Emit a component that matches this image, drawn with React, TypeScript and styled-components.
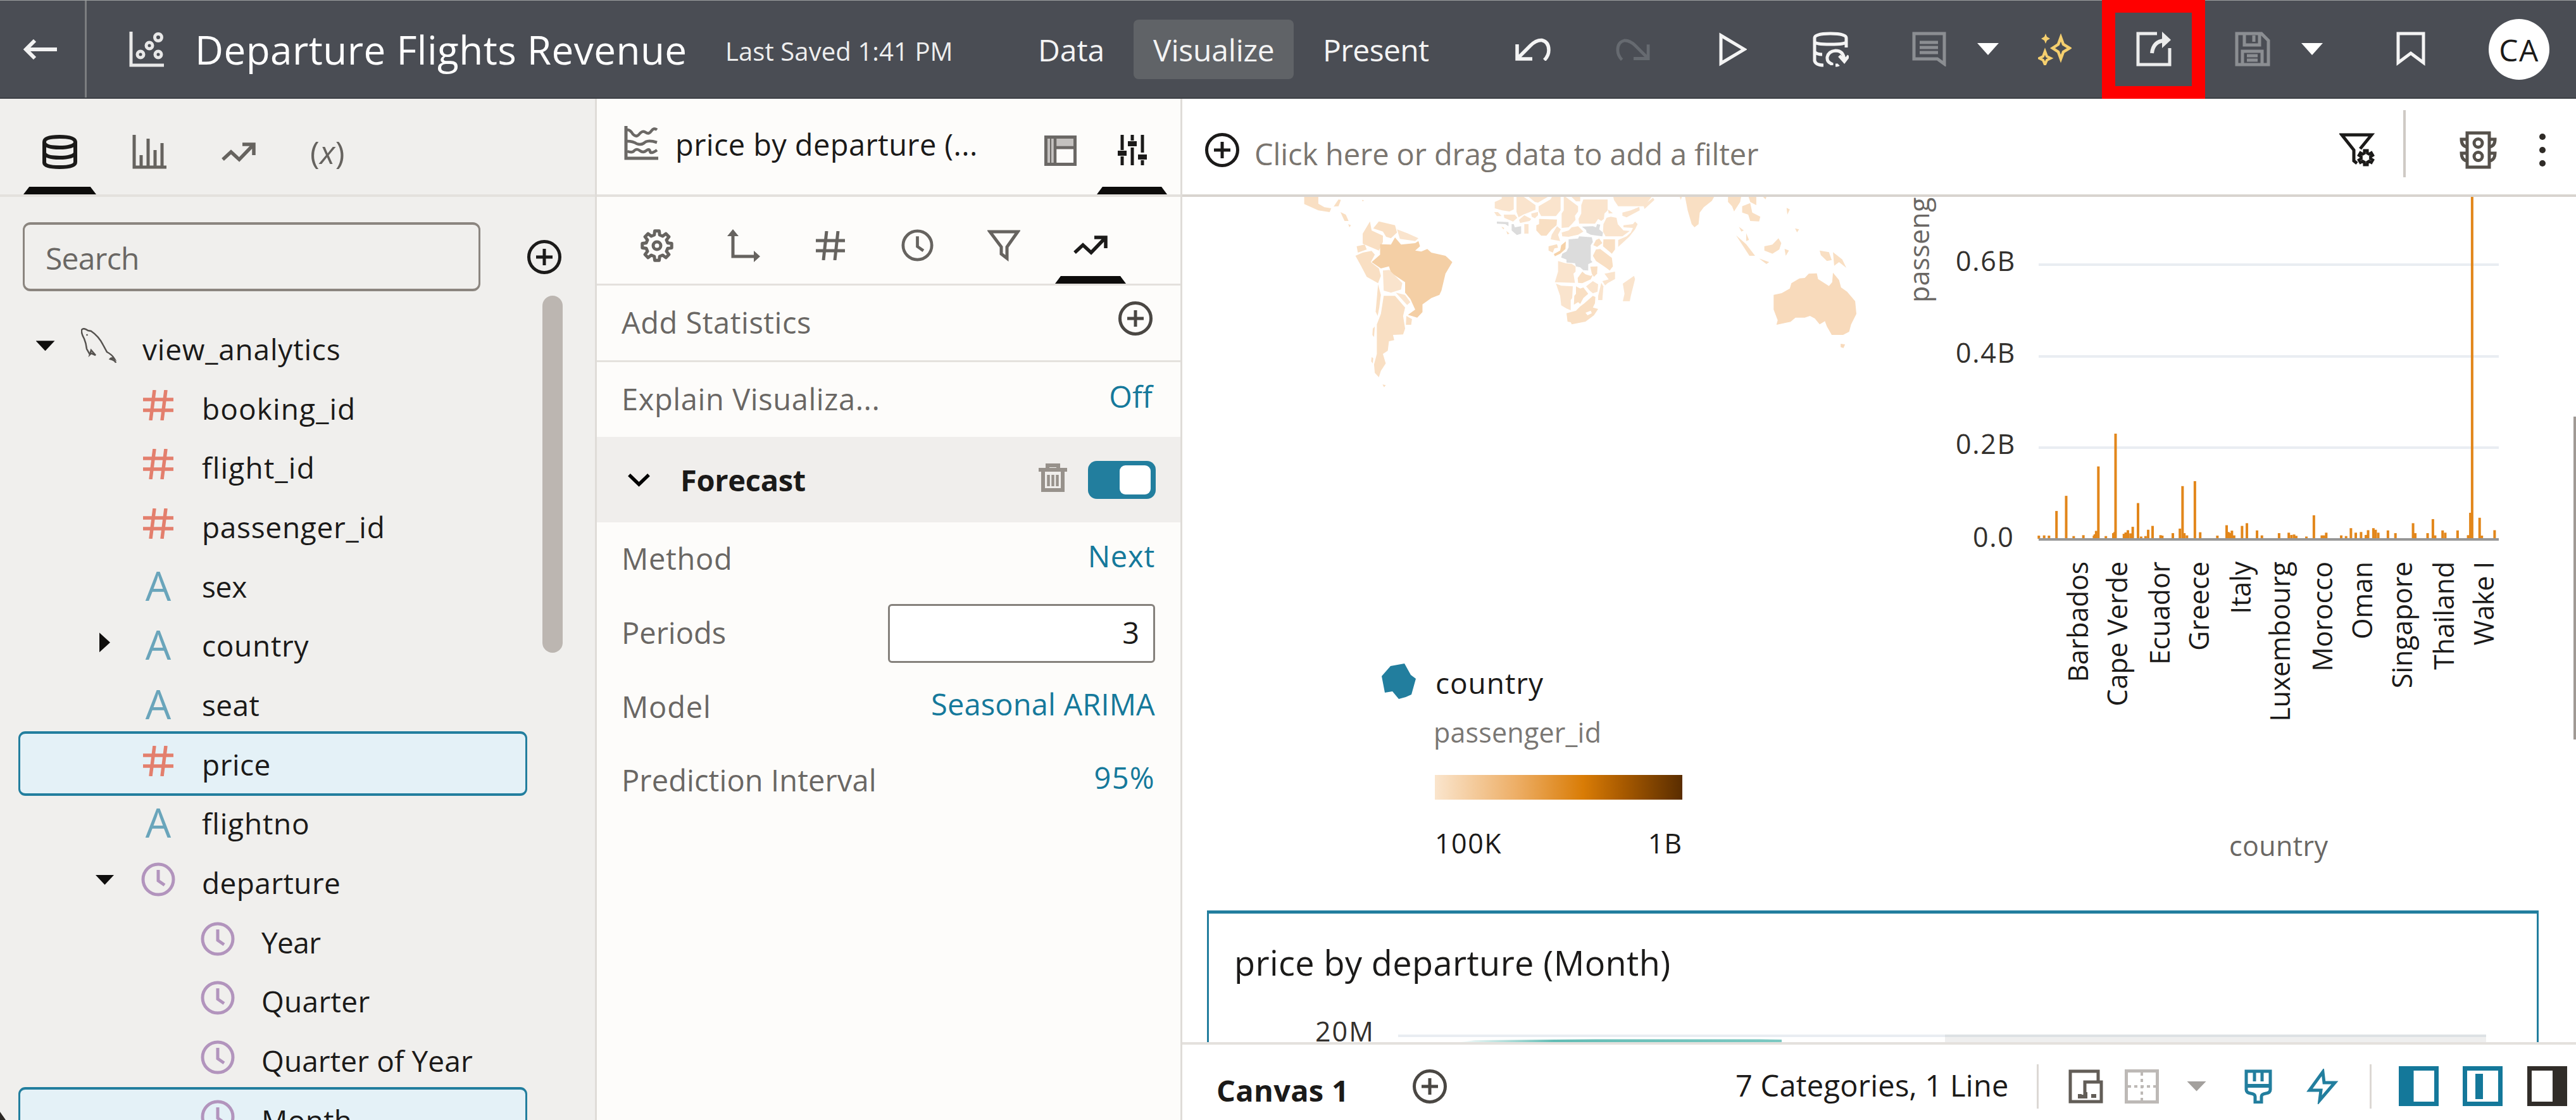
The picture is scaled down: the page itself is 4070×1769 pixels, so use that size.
import React from "react";
import styled, { createGlobalStyle, css } from "styled-components";

const ink = "#1b1a19";
const muted = "#6a6764";
const teal = "#227e9e";
const panelLine = "#e4e1dd";

const GlobalStyle = createGlobalStyle`
  * { box-sizing: border-box; }
  body { margin: 0; background: #fff; overflow: hidden; }
  body, input { font-family: "Open Sans", "Noto Sans", sans-serif; }
`;

/* ---------- shared parts ---------- */

const Icon = styled.svg<{ $w: number; $h: number; $color?: string; $stroke?: number }>`
  display: block;
  flex: none;
  width: ${(p) => p.$w}px;
  height: ${(p) => p.$h}px;
  color: ${(p) => p.$color ?? "inherit"};
  fill: none;
  stroke: currentColor;
  stroke-width: ${(p) => p.$stroke ?? 5};
`;

const Label = styled.span<{ $size?: number; $track?: number; $color?: string; $bold?: boolean }>`
  flex: none;
  white-space: pre;
  font-size: ${(p) => p.$size ?? 47}px;
  letter-spacing: ${(p) => p.$track ?? 0}px;
  color: ${(p) => p.$color ?? ink};
  font-weight: ${(p) => (p.$bold ? 700 : 400)};
  line-height: 64px;
`;

const Triangle = styled.i<{ $dir?: "down" | "right"; $w: number; $h: number; $color?: string }>`
  display: block;
  flex: none;
  width: ${(p) => p.$w}px;
  height: ${(p) => p.$h}px;
  background: ${(p) => p.$color ?? "#0f0e0d"};
  clip-path: ${(p) => (p.$dir === "right" ? "polygon(0 0, 100% 50%, 0 100%)" : "polygon(0 0, 100% 0, 50% 100%)")};
`;

const Grow = styled.div`
  flex: 1;
`;

const PlusCircle = ({ w = 54, h = 54, color = ink }: { w?: number; h?: number; color?: string }) => (
  <Icon $w={w} $h={h} $color={color} viewBox="0 0 54 54">
    <circle cx="27" cy="27" r="24.5" />
    <path d="M27 14v26M14 27h26" />
  </Icon>
);

const gearPoints = (cx: number, cy: number, teeth: number, rOut: number, rIn: number) => {
  const pts: string[] = [];
  const step = (Math.PI * 2) / teeth;
  for (let i = 0; i < teeth; i++) {
    const a = i * step - Math.PI / 2;
    [
      [-0.31, rIn],
      [-0.19, rOut],
      [0.19, rOut],
      [0.31, rIn],
    ].forEach(([o, r]) => pts.push(`${(cx + r * Math.cos(a + o * step)).toFixed(1)},${(cy + r * Math.sin(a + o * step)).toFixed(1)}`));
  }
  return pts.join(" ");
};

const ClockIcon = ({ size, color, stroke = 4.5 }: { size: number; color?: string; stroke?: number }) => (
  <Icon $w={size} $h={size} $color={color} $stroke={stroke} viewBox="0 0 54 54">
    <circle cx="27" cy="27" r="24" />
    <path d="M27 12v17l10 7" />
  </Icon>
);

const TrendIcon = () => (
  <Icon $w={54} $h={31} $stroke={5.5} viewBox="0 0 54 31">
    <path d="M2 27l13-12 13 12L50 4M33 3h18v17" />
  </Icon>
);

/* ---------- header ---------- */

const Header = styled.header`
  display: flex;
  align-items: center;
  height: 156px;
  background: #4a4d54;
  border-top: 1px solid #9da0a0;
  border-bottom: 2px solid #3c3f45;
  color: #fff;
`;

const BackButton = styled.button`
  display: flex;
  align-items: center;
  align-self: stretch;
  width: 137px;
  padding: 0 0 0 37px;
  border: 0;
  border-right: 3px solid #7c7e80;
  background: none;
  color: #f2f2f2;
`;

const WorkbookIcon = styled.div`
  margin: 0 49px 0 67px;
  color: #e8e8e8;
`;

const WorkbookTitle = styled(Label)`
  width: 838px;
`;

const SavedAt = styled(Label)`
  width: 463px;
  padding-top: 7px;
`;

const ModeTabs = styled.nav`
  display: flex;
  gap: 15px;
  height: 94px;
`;

const ModeTab = styled.a<{ $w: number; $active?: boolean }>`
  display: flex;
  align-items: center;
  width: ${(p) => p.$w}px;
  padding: 3px 0 0 31px;
  border-radius: 8px;
  background: ${(p) => (p.$active ? "#606367" : "transparent")};
`;

const Tool = styled.div<{ $gap: number; $dim?: string }>`
  flex: none;
  margin-left: ${(p) => p.$gap}px;
  color: ${(p) => p.$dim ?? "#f4f4f4"};
`;

const Highlight = styled.div`
  display: flex;
  flex: none;
  align-items: center;
  justify-content: center;
  width: 163px;
  height: 158px;
  margin-left: 48px;
  border: 21px solid #f00;
  color: #ececec;
`;

const Avatar = styled.div`
  display: flex;
  flex: none;
  align-items: center;
  justify-content: center;
  width: 96px;
  height: 96px;
  margin-left: 100px;
  padding-top: 3px;
  border-radius: 50%;
  background: #fff;
`;

const TopBar = () => (
  <Header>
    <BackButton aria-label="Back">
      <Icon $w={53} $h={32} $stroke={6} viewBox="0 0 53 32">
        <path d="M53 16H5M18 2L4 16l14 14" />
      </Icon>
    </BackButton>
    <WorkbookIcon>
      <Icon $w={55} $h={56} viewBox="0 0 55 56">
        <path d="M3 0v53h52" />
        <circle cx="18" cy="36" r="5" />
        <circle cx="46" cy="36" r="5" />
        <circle cx="32" cy="22" r="5" />
        <circle cx="46" cy="9" r="5.5" />
      </Icon>
    </WorkbookIcon>
    <WorkbookTitle $size={62} $track={0.45} $color="#fff">
      Departure Flights Revenue
    </WorkbookTitle>
    <SavedAt $size={40} $track={0.1} $color="#eeeeee">
      Last Saved 1:41 PM
    </SavedAt>
    <ModeTabs>
      <ModeTab $w={167}>
        <Label $size={48} $color="#f4f4f4">Data</Label>
      </ModeTab>
      <ModeTab $w={253} $active>
        <Label $size={48} $track={-0.2} $color="#f4f4f4">Visualize</Label>
      </ModeTab>
      <ModeTab $w={231}>
        <Label $size={48} $track={-0.6} $color="#f4f4f4">Present</Label>
      </ModeTab>
    </ModeTabs>
    <Tool $gap={104}>
      <Icon $w={56} $h={36} $stroke={5.5} viewBox="0 0 56 36">
        <path d="M3 10v23h24M5 31L24 12Q33 3 42 3.500Q53 6 53 19Q53 28 46 35" />
      </Icon>
    </Tool>
    <Tool $gap={103} $dim="#666a70">
      <Icon $w={54} $h={36} viewBox="0 0 56 36">
        <path d="M53 10v23H29M51 31L32 12Q23 3 14 3.500Q3 6 3 19Q3 28 10 35" />
      </Icon>
    </Tool>
    <Tool $gap={109}>
      <Icon $w={44} $h={54} viewBox="0 0 44 54">
        <path d="M3 5v44l37-22z" />
      </Icon>
    </Tool>
    <Tool $gap={104}>
      <Icon $w={57} $h={56} viewBox="0 0 57 56">
        <path d="M3 10Q3 3 28 3t25 7v6Q53 20 28 20T3 16zM3 14v32q2 7 14 7M3 32q4 4 12 4M53 14v11" />
        <path d="M30 53v-2Q22 48 23 40q2-9 13-10 13 0 14 15M42 38l8 9 7-9M36 53q4 0 5-1" />
      </Icon>
    </Tool>
    <Tool $gap={100} $dim="#8b8e92">
      <Icon $w={54} $h={55} viewBox="0 0 54 55">
        <path d="M3 3h48v48l-11-8H3zM12 17h29M12 25h29M12 33h29" />
      </Icon>
    </Tool>
    <Tool $gap={49}>
      <Triangle $w={34} $h={19} $color="#fff" />
    </Tool>
    <Tool $gap={62} $dim="#f5cf6e">
      <Icon $w={53} $h={50} $stroke={4.5} viewBox="0 0 53 50">
        <path d="M36 6l4 11 10 6-10 6-4 11-4-11-9-6 9-6z" />
        <path d="M11 28l3 8 6 3-6 3-3 7-3-7-6-3 6-3z" strokeWidth="4" />
        <path d="M12 0l2 5 5 3-5 3-2 5-2-5-5-3 5-3z" fill="currentColor" stroke="none" />
      </Icon>
    </Tool>
    <Highlight>
      <Icon $w={56} $h={55} viewBox="0 0 56 55">
        <path d="M33 3H3v49h50V26" />
        <path d="M25 34Q27 15 45 14" strokeWidth="6" />
        <path d="M41 0l14 13-14 13z" fill="currentColor" stroke="none" />
      </Icon>
    </Highlight>
    <Tool $gap={47} $dim="#8b8e92">
      <Icon $w={56} $h={55} viewBox="0 0 56 55">
        <path d="M3 3h39l11 11v38H3zM15 3v18h24V3M30 6v10M12 52V31h31v21M19 38h17M19 45h17" />
      </Icon>
    </Tool>
    <Tool $gap={49}>
      <Triangle $w={34} $h={19} $color="#fff" />
    </Tool>
    <Tool $gap={116}>
      <Icon $w={46} $h={56} viewBox="0 0 46 56">
        <path d="M3 3h40v46L23 34 3 49z" />
      </Icon>
    </Tool>
    <Avatar>
      <Label $size={48} $track={1.5}>CA</Label>
    </Avatar>
  </Header>
);

/* ---------- panel tabs ---------- */

const TabStrip = styled.div<{ $height: number; $left: number; $gap: number; $line: number }>`
  display: flex;
  flex: none;
  gap: ${(p) => p.$gap}px;
  height: ${(p) => p.$height}px;
  padding-left: ${(p) => p.$left}px;
  border-bottom: ${(p) => p.$line}px solid ${panelLine};
`;

const Tab = styled.div<{ $w: number; $active?: boolean }>`
  display: flex;
  flex: none;
  flex-direction: column;
  width: ${(p) => p.$w}px;
  color: ${(p) => (p.$active ? ink : "#66635f")};

  &::after {
    content: "";
    height: 12px;
    background: ${(p) => (p.$active ? "#0d0c0b" : "transparent")};
    clip-path: polygon(8% 0, 92% 0, 100% 100%, 0 100%);
  }
`;

const TabFace = styled.div<{ $top: number }>`
  display: flex;
  flex: 1;
  align-items: center;
  justify-content: center;
  padding-top: ${(p) => p.$top}px;
`;

const PanelTab = ({ w, top, active, children }: { w: number; top: number; active?: boolean; children: React.ReactNode }) => (
  <Tab $w={w} $active={active}>
    <TabFace $top={top}>{children}</TabFace>
  </Tab>
);

/* ---------- data panel ---------- */

const Body = styled.div`
  display: flex;
  height: 1613px;
`;

const DataPanel = styled.aside`
  display: flex;
  flex: none;
  flex-direction: column;
  width: 943px;
  overflow: hidden;
  background: #f0efed;
  border-right: 3px solid #dfdcd8;
`;

const Expression = styled.span`
  font-size: 50px;
  line-height: 60px;
  letter-spacing: 0.5px;
`;

const SearchRow = styled.div`
  display: flex;
  flex: none;
  align-items: center;
  padding: 40px 0 0 36px;
  gap: 74px;
`;

const SearchBox = styled.div`
  display: flex;
  align-items: center;
  width: 723px;
  height: 109px;
  padding: 4px 0 0 33px;
  border: 4px solid #8b857f;
  border-width: 4px 3px;
  border-radius: 12px;
`;

const TreeArea = styled.div`
  display: flex;
  flex: none;
  align-items: flex-start;
  gap: 24px;
  margin-top: 7px;
  padding-left: 29px;
`;

const Tree = styled.ul`
  flex: none;
  width: 804px;
  margin: 0;
  padding: 37px 0 0;
  list-style: none;
`;

const TreeRow = styled.li<{ $depth: number; $selected?: boolean }>`
  display: flex;
  align-items: center;
  height: 93.7px;
  padding-left: ${(p) => p.$depth * 94}px;
  border: 4px solid transparent;
  border-width: 0 3px;
  ${(p) =>
    p.$selected &&
    css`
      height: 101.7px;
      margin: -5px 0 -3px;
      padding-top: 2px;
      border: 4px solid ${teal};
      border-width: 4px 3px;
      border-radius: 11px;
      background: #e4f1f7;
    `}
`;

const CaretCell = styled.div`
  display: flex;
  flex: none;
  justify-content: center;
  width: 79px;
  padding-bottom: 9px;
`;

const TypeCell = styled.div`
  display: flex;
  flex: none;
  justify-content: center;
  width: 90px;
  margin-right: 24px;
  padding-bottom: 10px;
`;

const TextType = styled.span`
  margin-bottom: -8px;
  color: #6aa5bb;
  font-size: 64px;
  line-height: 64px;
  font-weight: 400;
`;

const TreeThumb = styled.div`
  flex: none;
  width: 32px;
  height: 564px;
  border-radius: 16px;
  background: #bcb6b1;
`;

type Kind = "source" | "measure" | "text" | "time";
const fields: { name: string; depth: number; kind: Kind; caret?: "down" | "right"; track: number; selected?: boolean }[] = [
  { name: "view_analytics", depth: 0, kind: "source", caret: "down", track: 0.8 },
  { name: "booking_id", depth: 1, kind: "measure", track: 1.1 },
  { name: "flight_id", depth: 1, kind: "measure", track: 1.2 },
  { name: "passenger_id", depth: 1, kind: "measure", track: 0.7 },
  { name: "sex", depth: 1, kind: "text", track: -0.3 },
  { name: "country", depth: 1, kind: "text", caret: "right", track: 0.7 },
  { name: "seat", depth: 1, kind: "text", track: 0.4 },
  { name: "price", depth: 1, kind: "measure", track: 0.5, selected: true },
  { name: "flightno", depth: 1, kind: "text", track: 0.8 },
  { name: "departure", depth: 1, kind: "time", caret: "down", track: 0.4 },
  { name: "Year", depth: 2, kind: "time", track: -0.6 },
  { name: "Quarter", depth: 2, kind: "time", track: 0.3 },
  { name: "Quarter of Year", depth: 2, kind: "time", track: 0.1 },
  { name: "Month", depth: 2, kind: "time", track: 0.3, selected: true },
];

const TypeIcon = ({ kind }: { kind: Kind }) => {
  if (kind === "text") return <TextType>A</TextType>;
  if (kind === "time") return <ClockIcon size={54} color="#b294bd" stroke={5} />;
  if (kind === "measure")
    return (
      <Icon $w={48} $h={48} $color="#e37f6d" $stroke={5.5} viewBox="0 0 48 48">
        <path d="M18 0L12 48M36 0L30 48M0 15h48M0 32h48" />
      </Icon>
    );
  return (
    <Icon $w={57} $h={56} $color="#55524f" $stroke={2.5} viewBox="0 0 57 56">
      <path d="M14 42l-5-9Q8 24 5 17 0 8 1 3q3-4 10 1l5 1Q28 13 35 27l6 11q8 4 12 11-5-3-7 0 8 2 9 6M14 42l2-7 7 8-7-3zM9 10l1 2" />
    </Icon>
  );
};

const DataTree = () => (
  <DataPanel>
    <TabStrip $height={155} $left={37} $gap={26} $line={4}>
      <PanelTab w={115} top={29} active>
        <Icon $w={55} $h={54} $stroke={6} viewBox="0 0 55 54">
          <path d="M3 11Q3 3 27 3t25 8v32q0 8-25 8T3 43z" />
          <path d="M3 13Q6 20 27 20t25-7M3 29Q6 36 27 36t25-7" />
        </Icon>
      </PanelTab>
      <PanelTab w={115} top={29}>
        <Icon $w={54} $h={54} viewBox="0 0 54 54">
          <path d="M3 0v51h51M14 50V32M25 50V6M36 50V24M47 50V13" />
        </Icon>
      </PanelTab>
      <PanelTab w={115} top={29}>
        <TrendIcon />
      </PanelTab>
      <PanelTab w={115} top={29}>
        <Expression>
          (<i>x</i>)
        </Expression>
      </PanelTab>
    </TabStrip>
    <SearchRow>
      <SearchBox>
        <Label $size={48} $track={-0.7} $color={muted}>Search</Label>
      </SearchBox>
      <PlusCircle />
    </SearchRow>
    <TreeArea>
      <Tree>
        {fields.map((f) => (
          <TreeRow key={f.name} $depth={f.depth} $selected={f.selected}>
            <CaretCell>
              {f.caret === "down" && <Triangle $w={30} $h={16} />}
              {f.caret === "right" && <Triangle $dir="right" $w={17} $h={31} />}
            </CaretCell>
            <TypeCell>
              <TypeIcon kind={f.kind} />
            </TypeCell>
            <Label $size={46} $track={f.track}>{f.name}</Label>
          </TreeRow>
        ))}
      </Tree>
      <TreeThumb />
    </TreeArea>
  </DataPanel>
);

/* ---------- properties panel ---------- */

const PropsPanel = styled.aside`
  display: flex;
  flex: none;
  flex-direction: column;
  width: 925px;
  background: #fdfcfa;
  border-right: 3px solid #dfdcd8;
`;

const VizHeader = styled.div`
  display: flex;
  flex: none;
  align-items: flex-start;
  height: 155px;
  padding-left: 43px;
  border-bottom: 4px solid ${panelLine};
`;

const VizGlyph = styled.div`
  margin: 43px 27px 0 0;
  color: #6b6865;
`;

const VizName = styled(Label)`
  width: 583px;
  margin-top: 40px;
`;

const GrammarButton = styled.div`
  width: 83px;
  padding-top: 58px;
  color: #6b6865;
`;

const SettingsSlot = styled.div`
  display: flex;
  align-self: stretch;
`;

const PropRow = styled.div<{ $height: number; $line?: boolean }>`
  display: flex;
  flex: none;
  align-items: center;
  height: ${(p) => p.$height}px;
  padding: 0 40px 0 39px;
  border-bottom: ${(p) => (p.$line ? 3 : 0)}px solid ${panelLine};
`;

const PropName = styled(Label)`
  padding-bottom: 2px;
`;

const PropValue = styled(Label)<{ $inset?: number }>`
  padding-bottom: 10px;
  margin-right: ${(p) => p.$inset ?? 0}px;
`;

const AddStat = styled.div`
  margin-right: 4px;
  padding-bottom: 14px;
`;

const SectionRow = styled.div`
  display: flex;
  flex: none;
  align-items: center;
  height: 135px;
  padding: 0 39px 0 49px;
  background: #f0eeec;
`;

const SectionName = styled(Label)`
  margin-left: 48px;
`;

const TrashSlot = styled.div`
  margin-right: 33px;
  padding-bottom: 6px;
  color: #97918b;
`;

const Toggle = styled.div`
  display: flex;
  justify-content: flex-end;
  width: 107px;
  height: 60px;
  padding: 7px 8px;
  border-radius: 14px;
  background: ${teal};
`;

const Knob = styled.div`
  width: 49px;
  height: 46px;
  border-radius: 9px;
  background: #fff;
`;

const NumberField = styled.div`
  display: flex;
  align-items: center;
  justify-content: flex-end;
  width: 422px;
  height: 93px;
  padding: 0 22px 3px 0;
  border: 3px solid #85817c;
  border-radius: 6px;
  background: #fff;
`;

const Properties = () => (
  <PropsPanel>
    <VizHeader>
      <VizGlyph>
        <Icon $w={54} $h={54} viewBox="0 0 54 54">
          <path d="M3 0v51h51" />
          <path d="M5 6q5 0 9 7 5 5 9 1 6-8 11-4t9-2 9-2M5 24q9 0 15 4 8 3 14-3 6-3 18 1M5 40q8 3 11-1 4-4 9 0t10 0 6 1 11-2" strokeWidth="4.5" />
        </Icon>
      </VizGlyph>
      <VizName $size={47} $track={0.38}>price by departure (...</VizName>
      <GrammarButton>
        <Icon $w={51} $h={48} $stroke={5} viewBox="0 0 51 48">
          <path d="M4 4h43v18H18v22H4z" fill="#c4c1bf" stroke="none" />
          <rect x="2.5" y="2.5" width="46" height="43" />
          <path d="M17 3v42M17 19h32" strokeWidth="4.5" />
          <path d="M10 3v42" strokeWidth="2" />
        </Icon>
      </GrammarButton>
      <SettingsSlot>
        <PanelTab w={111} top={22} active>
          <Icon $w={46} $h={48} viewBox="0 0 46 48">
            <path d="M7 0v24M7 34v14M23 0v9M23 20v28M39 0v28M39 40v8" />
            <path d="M0 29h14M16 14h14M32 35h14" strokeWidth="8" />
          </Icon>
        </PanelTab>
      </SettingsSlot>
    </VizHeader>
    <TabStrip $height={140} $left={39} $gap={25} $line={3}>
      <PanelTab w={112} top={28}>
        <Icon $w={52} $h={52} $stroke={5} viewBox="0 0 52 52">
          <polygon points={gearPoints(26, 26, 8, 23.5, 17.5)} strokeLinejoin="round" />
          <circle cx="26" cy="26" r="6" />
        </Icon>
      </PanelTab>
      <PanelTab w={112} top={28}>
        <Icon $w={52} $h={52} $stroke={5} viewBox="0 0 52 52">
          <path d="M9 6v37h38" />
          <path d="M9 0l9 11H0zM52 43l-10-9v18z" fill="currentColor" stroke="none" />
        </Icon>
      </PanelTab>
      <PanelTab w={112} top={28}>
        <Icon $w={46} $h={46} $stroke={5} viewBox="0 0 46 46">
          <path d="M17 0l-5 46M35 0l-5 46M0 15h46M0 31h46" />
        </Icon>
      </PanelTab>
      <PanelTab w={112} top={28}>
        <ClockIcon size={51} stroke={5} />
      </PanelTab>
      <PanelTab w={112} top={28}>
        <Icon $w={52} $h={50} $stroke={5} viewBox="0 0 52 50">
          <path d="M4 3h44L31 27v18l-9-7V27z" />
        </Icon>
      </PanelTab>
      <PanelTab w={112} top={28} active>
        <TrendIcon />
      </PanelTab>
    </TabStrip>
    <PropRow $height={121} $line>
      <PropName $track={0.52} $color={muted}>Add Statistics</PropName>
      <Grow />
      <AddStat>
        <PlusCircle color="#4a4743" />
      </AddStat>
    </PropRow>
    <PropRow $height={118}>
      <PropName $track={0.6} $color={muted}>Explain Visualiza...</PropName>
      <Grow />
      <PropValue $inset={4} $track={0.2} $color="#15799b">Off</PropValue>
    </PropRow>
    <SectionRow>
      <Icon $w={35} $h={22} $stroke={5.5} viewBox="0 0 35 22">
        <path d="M2 3l15.5 15L33 3" />
      </Icon>
      <SectionName $size={47} $bold $track={-0.3}>Forecast</SectionName>
      <Grow />
      <TrashSlot>
        <Icon $w={45} $h={45} $stroke={5} viewBox="0 0 45 45">
          <path d="M7 12v30h31V12M0 10h45M14 9V3h17v6" strokeWidth="6" />
          <path d="M15.5 18v18M22.5 18v18M29.5 18v18" strokeWidth="4.5" />
        </Icon>
      </TrashSlot>
      <Toggle>
        <Knob />
      </Toggle>
    </SectionRow>
    <PropRow $height={116.7}>
      <PropName $track={0.7} $color={muted}>Method</PropName>
      <Grow />
      <PropValue $track={0.8} $color="#15799b">Next</PropValue>
    </PropRow>
    <PropRow $height={116.7}>
      <PropName $color={muted}>Periods</PropName>
      <Grow />
      <NumberField>
        <Label $size={47}>3</Label>
      </NumberField>
    </PropRow>
    <PropRow $height={116.7}>
      <PropName $track={0.8} $color={muted}>Model</PropName>
      <Grow />
      <PropValue $track={0.15} $color="#15799b">Seasonal ARIMA</PropValue>
    </PropRow>
    <PropRow $height={116.7}>
      <PropName $track={0.1} $color={muted}>Prediction Interval</PropName>
      <Grow />
      <PropValue $track={1.3} $color="#15799b">95%</PropValue>
    </PropRow>
  </PropsPanel>
);

/* ---------- canvas ---------- */

const Canvas = styled.main`
  display: flex;
  flex: 1;
  flex-direction: column;
  min-width: 0;
  background: #fff;
`;

const FilterBar = styled.div`
  display: flex;
  flex: none;
  align-items: center;
  height: 155px;
  padding: 10px 48px 0 36px;
  border-bottom: 4px solid #d8d4cf;
`;

const FilterHint = styled(Label)`
  margin-left: 24px;
  padding-top: 12px;
`;

const BarDivider = styled.div<{ $w: number; $h: number; $ml: number; $mr: number; $color: string }>`
  flex: none;
  width: ${(p) => p.$w}px;
  height: ${(p) => p.$h}px;
  margin: 0 ${(p) => p.$mr}px 0 ${(p) => p.$ml}px;
  background: ${(p) => p.$color};
`;

const FilterDivider = styled(BarDivider)`
  margin-bottom: 20px;
`;

const MoreDots = styled.div`
  display: flex;
  flex-direction: column;
  justify-content: space-between;
  height: 52px;
  margin-left: 67px;

  i {
    width: 10px;
    height: 10px;
    border-radius: 50%;
    background: #2f2b27;
  }
`;

const Stage = styled.div`
  position: relative;
  flex: 1;
  min-height: 0;
  overflow: hidden;
`;

const StageThumb = styled.div`
  position: absolute;
  top: 347px;
  right: 0;
  width: 4px;
  height: 510px;
  background: #a09a95;
`;

const VizPair = styled.div`
  display: flex;
  height: 1127px;
`;

const MapViz = styled.section`
  flex: none;
  width: 1132px;
  padding-left: 132px;
`;

const MapDrawing = styled.svg`
  display: block;
  width: 1000px;
  height: 328px;
`;

const Legend = styled.div`
  display: grid;
  grid-template-columns: 54px 391px;
  column-gap: 30px;
  justify-items: start;
  margin: 409px 0 0 183px;
`;

const LegendTitle = styled(Label)`
  margin-left: 1px;
  line-height: 60px;
`;

const LegendMeasure = styled(Label)`
  grid-column: 2;
  margin: 19px 0 37px -2px;
  line-height: 60px;
`;

const Ramp = styled.div`
  grid-column: 2;
  width: 391px;
  height: 39px;
  background: linear-gradient(90deg, #fae5cd 0%, #edae66 33%, #d97c06 60%, #a85a00 76%, #5a2d00 100%);
`;

const RampEnds = styled.div`
  display: flex;
  grid-column: 2;
  justify-content: space-between;
  width: 391px;
  margin-top: 37px;
`;

const BarViz = styled.svg`
  display: block;
  flex: none;
  width: 1066px;
  height: 1127px;
  font-family: "Open Sans", "Noto Sans", sans-serif;
`;

const TrendCard = styled.section`
  width: 2104px;
  height: 400px;
  margin-left: 39px;
  border: 4px solid ${teal};
  border-width: 5px 3px;
  background: #fff;
`;

const CardTitle = styled(Label)`
  display: block;
  padding: 0 0 0 40px;
  line-height: 155px;
`;

const CardChart = styled.svg`
  display: block;
  width: 2098px;
  height: 49px;
  font-family: "Open Sans", "Noto Sans", sans-serif;
`;

const Footer = styled.footer`
  display: flex;
  flex: none;
  align-items: center;
  height: 123px;
  padding: 12px 0 0 54px;
  border-top: 4px solid ${panelLine};
`;

const CanvasName = styled(Label)`
  width: 310px;
  padding-top: 12px;
`;

const Summary = styled(Label)`
  width: 433px;
  margin-left: 456px;
  padding-bottom: 4px;
`;

const FootIcon = styled.div<{ $gap: number; $color: string }>`
  flex: none;
  margin-left: ${(p) => p.$gap}px;
  color: ${(p) => p.$color};
`;

const TAN = "#fae4cd";
const SAND = "#f9dfc3";
const GREY = "#dcdcdc";

const africa: [string, string][] = [
  [TAN, "35,45 68,30 68,12 125,12 125,80 105,90 70,85 35,75"],
  [TAN, "138,12 160,12 228,60 228,82 195,95 170,105 148,118 138,92"],
  [TAN, "185,12 285,12 285,22 240,48 225,45"],
  [TAN, "32,93 50,93 68,112 45,112"],
  [TAN, "78,105 130,105 142,120 122,138 80,120"],
  [TAN, "150,130 175,108 208,125 200,135 155,145"],
  [TAN, "243,65 300,32 310,12 347,12 347,85 325,112 255,112 243,90"],
  [TAN, "208,100 240,92 240,108 225,122 210,115"],
  [TAN, "175,150 195,150 195,195 175,195"],
  [SAND, "245,125 330,128 328,155 305,175 280,205 255,205 232,180 232,155 245,150"],
  [TAN, "362,12 372,22 430,65 430,90 415,110 418,130 400,150 385,165 352,168 352,100 362,85"],
  [TAN, "390,12 440,12 440,42 420,42"],
  [TAN, "455,33 570,33 570,85 555,100 552,125 540,135 525,125 510,148 435,148 432,125 445,100 445,60"],
  [TAN, "330,160 348,175 335,200 345,230 300,222 305,200"],
  [TAN, "352,190 385,180 400,165 430,160 455,185 430,200 385,210 355,208"],
  [GREY, "448,162 500,160 515,165 520,150 535,152 530,175 548,190 545,208 520,205 490,200 470,190 468,178"],
  [GREY, "385,222 430,218 435,208 495,212 500,235 490,250 490,320 498,330 478,340 478,370 455,368 440,355 420,350 415,335 375,332 375,318 350,308 355,290 375,280 385,260"],
  [TAN, "565,120 585,115 612,120 618,150 645,180 675,182 640,208 560,208 548,185 550,150"],
  [TAN, "645,155 690,150 700,138 712,150 700,175 672,210 620,258 620,225 660,208 680,190 690,168 645,165"],
  [TAN, "572,80 595,98 575,100"],
  [SAND, "550,222 605,222 605,270 590,290 548,255"],
  [SAND, "515,225 530,218 545,240 520,258 502,250"],
  [SAND, "515,270 535,268 590,310 595,350 580,370 560,355 515,325 500,300"],
  [SAND, "290,255 330,245 335,262 318,265 310,285 290,275"],
  ["#f6d2a9", "350,250 372,232 370,268 345,290 320,302 315,292 345,275"],
  [TAN, "335,325 370,335 400,338 418,350 418,375 408,385 415,428 320,425 335,375"],
  [SAND, "428,405 450,375 465,388 490,395 500,390 490,412 450,430 430,428"],
  [SAND, "488,352 522,350 520,385 505,400 495,385"],
  [TAN, "555,385 605,375 605,410 570,430 558,440 545,420 575,412"],
  [TAN, "540,428 550,445 545,510 525,510 525,490"],
  [TAN, "325,432 350,442 405,445 402,500 395,510 395,558 375,550 350,535 345,490"],
  [SAND, "420,445 440,455 455,450 478,480 455,500 440,528 430,520 410,532 412,490 420,480"],
  [TAN, "468,445 500,420 525,435 522,470 500,478 485,465"],
  [SAND, "375,572 420,560 440,540 460,525 500,490 512,495 510,525 500,545 525,552 505,582 465,612 400,625 395,615 380,612"],
  ["#ffffff", "465,570 490,560 495,572 475,582"],
  [TAN, "642,432 695,395 700,410 680,490 675,515 642,515 650,480"],
  [TAN, "595,12 785,12 745,65 620,65 600,35"],
  [TAN, "640,95 680,85 720,68 722,85 660,118 640,110"],
  [TAN, "740,62 785,25 792,35 745,78"],
  [GREY, "45,138 100,140 100,160 85,150 45,148"],
  [GREY, "115,150 125,150 130,165 160,160 160,195 140,202 115,180"],
  [SAND, "66,162 80,168 76,175"],
  [SAND, "90,182 105,195 95,198"],
];

const elsewhere: [string, string][] = [
  [SAND, "95,30 130,30 130,68 145,85 162,90 158,108 130,100 95,70"],
  [SAND, "180,48 186,50 180,80 168,82"],
  [SAND, "185,108 198,120 205,150 195,150 190,130"],
  [SAND, "238,50 243,52 240,58"],
  [SAND, "204,165 211,170 207,180"],
  [SAND, "258,152 262,195 290,220 290,250 280,290 240,258 240,210"],
  [SAND, "225,270 245,262 250,285 228,300"],
  [SAND, "222,315 240,300 262,292 270,310 260,345 280,375 285,410 278,445 250,415 235,360"],
  [SAND, "266,185 280,152 320,170 325,205 310,232 298,225 290,200"],
  [TAN, "325,190 350,208 378,232 370,245 332,235"],
  ["#f4cfa5", "283,260 310,262 320,228 335,262 370,255 378,245 382,270 370,290 385,295 400,283 410,300 445,315 462,345 445,400 435,480 430,500 410,515 388,545 388,582 375,608 352,595 370,570 358,520 345,490 345,440 310,395 305,365 285,375 262,345 283,310"],
  [TAN, "290,385 306,382 338,445 335,475 310,490 292,480"],
  [TAN, "322,490 345,500 358,535 350,548"],
  [SAND, "292,505 320,505 345,560 340,600 345,660 340,688 315,690 318,715 305,720 302,765 290,780 297,825 285,860 280,890 270,870 268,830 275,780 275,640 285,590"],
  [SAND, "278,450 285,500 281,560 277,600 272,580"],
  [SAND, "265,660 270,650 268,700 264,690"],
  [SAND, "262,795 266,800 265,825 261,815"],
  [SAND, "348,600 362,615 360,642 347,642"],
  [SAND, "289,925 297,928 293,938"],
  [SAND, "1038,30 1112,30 1105,55 1085,85 1075,110 1072,165 1062,180 1055,165 1045,100"],
  [TAN, "1024,30 1032,30 1028,50"],
  [SAND, "1145,30 1178,30 1175,60 1160,105 1155,80 1145,60"],
  [SAND, "1180,80 1200,65 1205,110 1225,130 1222,152 1200,150 1195,120 1180,110"],
  [SAND, "1195,30 1215,36 1215,75 1200,60"],
  [SAND, "1232,36 1240,36 1238,48"],
  [SAND, "1165,218 1190,260 1212,315 1198,315"],
  [SAND, "1172,178 1184,195 1178,200"],
  [SAND, "1190,208 1197,240 1190,245"],
  [SAND, "1235,270 1255,262 1270,232 1277,255 1272,285 1255,305 1235,290"],
  [SAND, "1222,328 1247,345 1240,354"],
  [SAND, "1285,282 1296,290 1288,315"],
  [SAND, "1290,88 1298,95 1292,120"],
  [SAND, "1311,185 1321,190 1316,204"],
  [SAND, "1372,290 1395,298 1402,335 1390,340 1375,312"],
  [SAND, "1405,298 1428,332 1438,372 1420,345 1408,362"],
  ["#f8dabb", "1258,500 1278,492 1298,470 1302,445 1322,422 1335,420 1345,400 1365,398 1368,425 1395,458 1403,440 1405,395 1420,430 1425,465 1440,485 1460,530 1463,590 1450,640 1445,675 1430,690 1402,690 1390,650 1385,625 1372,640 1360,612 1348,600 1335,608 1312,608 1300,628 1265,642 1268,620 1258,570"],
  ["#f8dabb", "1424,732 1435,735 1431,752 1424,748"],
];

const CountryMap = () => (
  <MapDrawing viewBox="0 36 1568 984" preserveAspectRatio="none">
    {elsewhere.map(([fill, points], i) => (
      <polygon key={i} fill={fill} points={points} />
    ))}
    <g transform="translate(548.8 15) scale(.5227 1)">
      {africa.map(([fill, points], i) => (
        <polygon key={i} fill={fill} points={points} />
      ))}
    </g>
  </MapDrawing>
);

/* [x, height] of each bar, in drawing units */
const bars: [number, number][] = [
  [388, 123], [410, 190], [483, 320], [522, 465], [573, 158], [674, 233], [702, 255], [972, 104], [1242, 87], [1327, 115],
  [1331, 1520], [1348, 93], [1197, 69], [774, 60], [778, 30], [820, 69], [809, 57], [606, 57], [561, 53], [596, 40], [550, 38],
  [478, 35], [475, 20], [517, 25], [520, 30], [668, 45], [714, 29], [843, 37], [893, 25], [915, 27], [1000, 27], [1056, 47],
  [1067, 27], [1079, 30], [1095, 38], [1107, 47], [1112, 40], [1118, 27], [1140, 37], [1157, 25], [1230, 25], [1264, 37],
  [1270, 27], [1298, 37], [1382, 38], [348, 14], [360, 15], [371, 14], [427, 12], [449, 16], [473, 14], [500, 12], [541, 22],
  [545, 28], [556, 24], [580, 10], [590, 12], [624, 16], [628, 14], [652, 25], [678, 25], [684, 15], [753, 14], [782, 26],
  [786, 36], [791, 15], [854, 15], [921, 17], [927, 19], [932, 13], [955, 10], [990, 15], [995, 15], [1034, 15], [1045, 12],
  [1090, 17], [1202, 25], [1247, 15], [1322, 16], [1353, 14],
];

const ticks: [string, number, number, number][] = [
  ["0.6B", 3090, 429, 419],
  ["0.4B", 3090, 574, 564],
  ["0.2B", 3090, 718, 708],
];

const countries: [string, number][] = [
  ["Barbados", 3299], ["Cape Verde", 3361], ["Ecuador", 3428], ["Greece", 3490], ["Italy", 3556], ["Luxembourg", 3618],
  ["Morocco", 3685], ["Oman", 3748], ["Singapore", 3811], ["Thailand", 3877], ["Wake I", 3940],
];

const CountryBars = () => (
  <BarViz viewBox="3000 312 1066 1127" fontSize="43">
    <text transform="translate(3048 479) rotate(-90)" fill={muted} letterSpacing="0.2">passeng</text>
    {ticks.map(([t, x, base, y]) => (
      <React.Fragment key={t}>
        <text x={x} y={base} fill="#33302d" letterSpacing="1.7">{t}</text>
        <path d={`M3221 ${y}H3948`} stroke="#e9edf2" strokeWidth="4" />
      </React.Fragment>
    ))}
    <text x="3117" y="865" fill="#33302d" letterSpacing="1.7">0.0</text>
    {bars.map(([x, h], i) => (
      <rect key={i} x={2979 + x / 1.436 - 2} y={852 - h / 2.8} width="4" height={h / 2.8} fill="#e2861a" />
    ))}
    <path d="M3221 853H3948" stroke="#979797" strokeWidth="4" />
    {countries.map(([name, x]) => (
      <text key={name} transform={`translate(${x} 888) rotate(-90)`} textAnchor="end" fill={ink} letterSpacing="-0.2">
        {name}
      </text>
    ))}
    <text x="3522" y="1353" fill={muted} letterSpacing="0.4">country</text>
  </BarViz>
);

const CanvasView = () => (
  <Canvas>
    <FilterBar>
      <PlusCircle />
      <FilterHint $size={47} $track={-0.11} $color="#7a756f">Click here or drag data to add a filter</FilterHint>
      <Grow />
      <Icon $w={56} $h={54} $color={ink} viewBox="0 0 56 54">
        <path d="M33 25L51 3H4l19 24v17l5 4" />
        <polygon points={gearPoints(42, 39, 6, 11.5, 7.5)} strokeWidth="4.5" />
      </Icon>
      <FilterDivider $w={4} $h={106} $ml={45} $mr={85} $color="#cfcac5" />
      <Icon $w={59} $h={60} $color="#56514b" viewBox="0 0 59 60">
        <path d="M12 3h35v54H12z" />
        <circle cx="29.5" cy="19" r="6.5" />
        <circle cx="29.5" cy="40" r="6.5" />
        <path d="M12 13H3q0 11 9 12M12 35H3q0 11 9 12M47 13h9q0 11-9 12M47 35h9q0 11-9 12" />
      </Icon>
      <MoreDots>
        <i />
        <i />
        <i />
      </MoreDots>
    </FilterBar>
    <Stage>
      <VizPair>
        <MapViz>
          <CountryMap />
          <Legend>
            <Icon $w={54} $h={56} $color={teal} viewBox="0 0 54 56">
              <path d="M0 20L14 4l22-4 10 18 8 6-7 25-9 4-11 3-10-12-12 2z" fill="currentColor" stroke="none" />
            </Icon>
            <LegendTitle $size={46} $track={0.95}>country</LegendTitle>
            <LegendMeasure $size={43} $track={0.2} $color="#7a7774">passenger_id</LegendMeasure>
            <Ramp />
            <RampEnds>
              <Label $size={43} $track={1.5}>100K</Label>
              <Label $size={43} $track={1}>1B</Label>
            </RampEnds>
          </Legend>
        </MapViz>
        <CountryBars />
      </VizPair>
      <TrendCard>
        <CardTitle $size={54} $track={0.42}>price by departure (Month)</CardTitle>
        <CardChart viewBox="1910 1598 2098 49">
          <defs>
            <linearGradient id="crest" x1="0" x2="1">
              <stop offset="0" stopColor="#63bdb5" stopOpacity="0" />
              <stop offset="0.3" stopColor="#63bdb5" />
              <stop offset="1" stopColor="#7cc9c2" />
            </linearGradient>
          </defs>
          <text x="2078" y="1645" fontSize="43" letterSpacing="2" fill="#33302d">20M</text>
          <path d="M2209 1636H3073" stroke="#e9edf2" strokeWidth="4" />
          <path d="M3073 1634H3928V1647H3073z" fill="#efefef" />
          <path d="M3073 1636H3928" stroke="#dde1e4" strokeWidth="4" />
          <path d="M2300 1647L2330 1643 2520 1641.5H2780L2815 1642V1647z" fill="url(#crest)" />
        </CardChart>
      </TrendCard>
      <StageThumb />
    </Stage>
    <Footer>
      <CanvasName $bold $size={47} $track={0.3}>Canvas 1</CanvasName>
      <PlusCircle color="#4a4743" />
      <Summary $size={47} $track={0.25}>7 Categories, 1 Line</Summary>
      <BarDivider $w={3} $h={70} $ml={43} $mr={0} $color="#dcd8d4" />
      <FootIcon $gap={47} $color="#625d57">
        <Icon $w={55} $h={54} viewBox="0 0 55 54">
          <path d="M47 18V3H3v48h49V20H26v22" />
          <path d="M27 36v7h-9v-4M36 42h8" strokeWidth="6" />
        </Icon>
      </FootIcon>
      <FootIcon $gap={34} $color="#bdb9b6">
        <Icon $w={54} $h={54} viewBox="0 0 54 54">
          <rect x="2.5" y="2.5" width="49" height="49" />
          <path d="M27 5v45M5 27h45" strokeDasharray="5 5" strokeWidth="4" />
        </Icon>
      </FootIcon>
      <FootIcon $gap={44} $color="#a3a09d">
        <Triangle $w={31} $h={16} $color="#a3a09d" />
      </FootIcon>
      <FootIcon $gap={60} $color={teal}>
        <Icon $w={44} $h={54} viewBox="0 0 44 54">
          <path d="M3 3h38v29q0 5-7 6-7 1-7 5v9h-10v-9q0-4-7-5-7-1-7-6zM16 3v16M28 3v16" />
          <path d="M3 26h38" strokeWidth="6" />
        </Icon>
      </FootIcon>
      <FootIcon $gap={53} $color={teal}>
        <Icon $w={53} $h={56} viewBox="0 0 53 56">
          <path d="M27 5L6 34h18l-2 16 24-28H29z" />
        </Icon>
      </FootIcon>
      <BarDivider $w={3} $h={70} $ml={48} $mr={0} $color="#dcd8d4" />
      <FootIcon $gap={43} $color="#14789a">
        <Icon $w={63} $h={63} $stroke={7} viewBox="0 0 63 63">
          <path d="M3.5 3.5h56v56h-56z" />
          <path d="M3.5 4h20v55h-20z" fill="currentColor" stroke="none" />
        </Icon>
      </FootIcon>
      <FootIcon $gap={38} $color="#14789a">
        <Icon $w={63} $h={63} $stroke={7} viewBox="0 0 63 63">
          <path d="M3.5 3.5h56v56h-56z" />
          <path d="M26 12v40" strokeWidth="12" />
        </Icon>
      </FootIcon>
      <FootIcon $gap={39} $color="#312d29">
        <Icon $w={63} $h={63} $stroke={7} viewBox="0 0 63 63">
          <path d="M3.5 3.5h56v56h-56z" />
          <path d="M40 4h20v55H40z" fill="currentColor" stroke="none" />
        </Icon>
      </FootIcon>
    </Footer>
  </Canvas>
);

const Screen = styled.div`
  position: relative;
  width: 4070px;
  height: 1769px;
  overflow: hidden;
`;

const PointerTip = styled.div`
  position: absolute;
  left: 0;
  bottom: 0;
  width: 9px;
  height: 13px;
  background: #2b2724;
  clip-path: polygon(0 0, 100% 100%, 0 100%);
`;

export default function App() {
  return (
    <Screen>
      <GlobalStyle />
      <TopBar />
      <Body>
        <DataTree />
        <Properties />
        <CanvasView />
      </Body>
      <PointerTip />
    </Screen>
  );
}
